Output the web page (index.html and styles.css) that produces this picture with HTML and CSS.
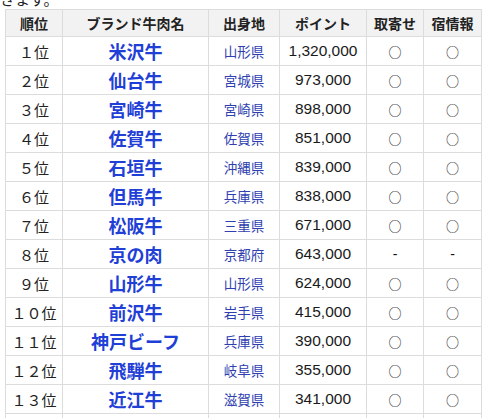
FILE: index.html
```html
<!DOCTYPE html>
<html lang="ja">
<head>
<meta charset="utf-8">
<link rel="stylesheet" href="styles.css">
</head>
<body>
<p class="lead">きます。</p>
<table class="rank">
<thead>
<tr><th class="c1">順位</th><th class="c2">ブランド牛肉名</th><th class="c3">出身地</th><th class="c4">ポイント</th><th class="c5">取寄せ</th><th class="c6">宿情報</th></tr>
</thead>
<tbody>
<tr><td>１位</td><td class="brand">米沢牛</td><td class="pref">山形県</td><td class="pt">1,320,000</td><td class="mk">○</td><td class="mk">○</td></tr>
<tr><td>２位</td><td class="brand">仙台牛</td><td class="pref">宮城県</td><td class="pt">973,000</td><td class="mk">○</td><td class="mk">○</td></tr>
<tr><td>３位</td><td class="brand">宮崎牛</td><td class="pref">宮崎県</td><td class="pt">898,000</td><td class="mk">○</td><td class="mk">○</td></tr>
<tr><td>４位</td><td class="brand">佐賀牛</td><td class="pref">佐賀県</td><td class="pt">851,000</td><td class="mk">○</td><td class="mk">○</td></tr>
<tr><td>５位</td><td class="brand">石垣牛</td><td class="pref">沖縄県</td><td class="pt">839,000</td><td class="mk">○</td><td class="mk">○</td></tr>
<tr><td>６位</td><td class="brand">但馬牛</td><td class="pref">兵庫県</td><td class="pt">838,000</td><td class="mk">○</td><td class="mk">○</td></tr>
<tr><td>７位</td><td class="brand">松阪牛</td><td class="pref">三重県</td><td class="pt">671,000</td><td class="mk">○</td><td class="mk">○</td></tr>
<tr><td>８位</td><td class="brand">京の肉</td><td class="pref">京都府</td><td class="pt">643,000</td><td class="mk dash">-</td><td class="mk dash">-</td></tr>
<tr><td>９位</td><td class="brand">山形牛</td><td class="pref">山形県</td><td class="pt">624,000</td><td class="mk">○</td><td class="mk">○</td></tr>
<tr><td>１０位</td><td class="brand">前沢牛</td><td class="pref">岩手県</td><td class="pt">415,000</td><td class="mk">○</td><td class="mk">○</td></tr>
<tr><td>１１位</td><td class="brand">神戸ビーフ</td><td class="pref">兵庫県</td><td class="pt">390,000</td><td class="mk">○</td><td class="mk">○</td></tr>
<tr><td>１２位</td><td class="brand">飛騨牛</td><td class="pref">岐阜県</td><td class="pt">355,000</td><td class="mk">○</td><td class="mk">○</td></tr>
<tr><td>１３位</td><td class="brand">近江牛</td><td class="pref">滋賀県</td><td class="pt">341,000</td><td class="mk">○</td><td class="mk">○</td></tr>
<tr class="tail"><td></td><td></td><td></td><td></td><td></td><td></td></tr>
</tbody>
</table>
</body>
</html>
```
FILE: styles.css
```css
html, body {
  margin: 0;
  padding: 0;
  background: #ffffff;
  font-family: "Liberation Sans", "Noto Sans CJK JP", sans-serif;
  color: #222222;
}
.lead {
  margin: -9px 0 0 0;
  font-size: 15px;
  line-height: 18px;
  height: 18px;
}
.rank {
  margin-left: 5px;
  border-collapse: collapse;
  table-layout: fixed;
  width: 475px;
}
.rank th, .rank td {
  border: 1px solid #dcdcdc;
  text-align: center;
  padding: 0;
  white-space: nowrap;
  overflow: hidden;
}
.rank th {
  height: 26px;
  background: #f2f2f2;
  font-size: 14px;
  font-weight: bold;
  color: #222222;
}
.rank td {
  height: 28px;
  font-size: 15px;
}
.c1 { width: 56px; }
.c2 { width: 145px; }
.c3 { width: 70px; }
.c4 { width: 86px; }
.c5 { width: 56px; }
.c6 { width: 57px; }
.rank td.brand {
  font-size: 18px;
  font-weight: bold;
  color: #1f3fd6;
}
.rank td.pref {
  font-size: 13.5px;
  color: #2f3fb0;
}
.rank td.pt {
  font-size: 15.5px;
  color: #1a1a1a;
}
.rank td.mk {
  font-family: "Noto Sans CJK JP", sans-serif;
  font-size: 13px;
  color: #111111;
}
.rank td.dash {
  font-family: "Liberation Sans", sans-serif;
  font-size: 14px;
}
```
